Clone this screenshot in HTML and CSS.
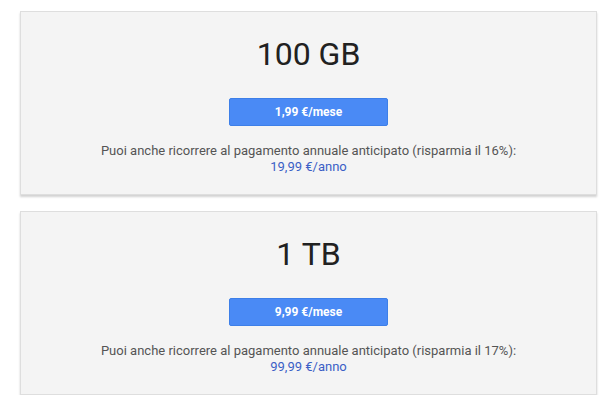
FILE: index.html
```html
<!DOCTYPE html>
<html lang="it">
<head>
<meta charset="utf-8">
<link rel="stylesheet" href="styles.css">
</head>
<body>
<div class="plans">
  <div class="card">
    <div class="size">100 GB</div>
    <button class="btn">1,99 €/mese</button>
    <p class="note">Puoi anche ricorrere al pagamento annuale anticipato (risparmia il 16%):<br><a class="annual" href="#">19,99 €/anno</a></p>
  </div>
  <div class="card">
    <div class="size">1 TB</div>
    <button class="btn">9,99 €/mese</button>
    <p class="note">Puoi anche ricorrere al pagamento annuale anticipato (risparmia il 17%):<br><a class="annual" href="#">99,99 €/anno</a></p>
  </div>
</div>
</body>
</html>
```
FILE: styles.css
```css
html, body {
  margin: 0;
  padding: 0;
  background: #ffffff;
}
body {
  font-family: Roboto, "Liberation Sans", Arial, sans-serif;
}
.plans {
  display: flex;
  flex-direction: column;
  gap: 16px;
  width: 577px;
  padding: 11px 0 0 20px;
}
.card {
  box-sizing: border-box;
  height: 184px;
  background: #f4f4f4;
  border: 1px solid #dedede;
  box-shadow: 0 2px 2px rgba(0, 0, 0, 0.18);
  display: flex;
  flex-direction: column;
  align-items: center;
  padding-top: 24px;
}
.size {
  font-size: 32px;
  line-height: 37px;
  color: #212121;
  font-weight: 400;
}
.btn {
  margin-top: 25px;
  width: 159px;
  height: 28px;
  border: 1px solid #3d7fe8;
  border-radius: 2px;
  background: #4a8af5;
  color: #ffffff;
  font-family: Roboto, "Liberation Sans", Arial, sans-serif;
  font-weight: 700;
  font-size: 12px;
  padding: 0;
}
.note {
  margin: 17px 0 0;
  font-size: 13px;
  line-height: 16px;
  color: #555555;
  text-align: center;
}
.annual {
  color: #3b5fc6;
  text-decoration: none;
}
```
